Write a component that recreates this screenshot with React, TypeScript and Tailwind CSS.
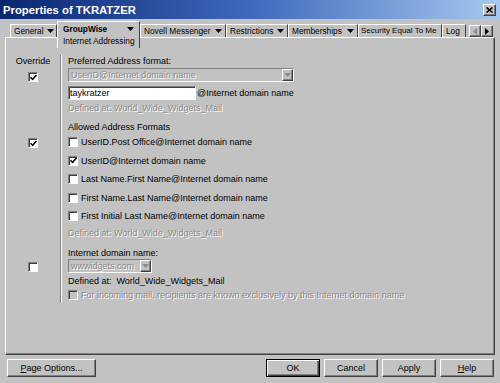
import React from "react";

const raised =
  "border border-t-white border-l-white border-b-[#404040] border-r-[#404040] shadow-[inset_-1px_-1px_0_#808080]";
const sunken =
  "border border-t-[#808080] border-l-[#808080] border-b-white border-r-white";
const dim = "text-[#8a8a8a] [text-shadow:1px_1px_0_#ffffff]";

function Arrow({ disabled }: { disabled?: boolean }) {
  return (
    <svg width="7" height="4" viewBox="0 0 7 4" className="shrink-0">
      <path d="M0 0h7L3.5 4z" fill={disabled ? "#8a8a8a" : "#000"} />
    </svg>
  );
}

function Check({ checked, disabled }: { checked?: boolean; disabled?: boolean }) {
  return (
    <span
      className={`w-[10px] h-[10px] shrink-0 flex items-center justify-center ${sunken} shadow-[inset_1px_1px_0_#404040] ${
        disabled ? "bg-[#c2c2c2]" : "bg-white"
      }`}
    >
      {checked && (
        <svg width="7" height="7" viewBox="0 0 7 7">
          <path d="M0.5 3.2L2.6 5.4L6.4 1" fill="none" stroke="#000" strokeWidth="1.6" />
        </svg>
      )}
    </span>
  );
}

function Tab({ label, className, arrow }: { label: string; className: string; arrow?: boolean }) {
  return (
    <div
      className={`h-[13px] mt-[3px] shrink-0 flex items-center justify-between gap-[3px] border-t border-l border-r border-t-white border-l-white border-r-[#404040] overflow-hidden whitespace-nowrap ${className}`}
    >
      <span>{label}</span>
      {arrow && <Arrow />}
    </div>
  );
}

function Row({ label, checked }: { label: string; checked?: boolean }) {
  return (
    <div className="h-[18.5px] flex items-center gap-[3px]">
      <Check checked={checked} />
      <span>{label}</span>
    </div>
  );
}

function Btn({ children, className }: { children: React.ReactNode; className: string }) {
  return (
    <button className={`h-[18px] flex items-center justify-center text-[9px] text-black ${className}`}>
      {children}
    </button>
  );
}

export default function App() {
  return (
    <div className="w-[500px] h-[383px] bg-[#c2c2c2] flex flex-col font-['Liberation_Sans',Arial,sans-serif] text-[9px] text-black leading-[12px] select-none overflow-hidden">
      {/* title bar */}
      <div className="h-[19px] flex items-center justify-between pl-[3px] pr-[4px] bg-linear-to-r from-[#0a2670] via-[#3f69bb] to-[#a6c8ee]">
        <span className="text-white font-bold text-[11.3px]">Properties of TKRATZER</span>
        <span className={`w-[13px] h-[12px] bg-[#c2c2c2] flex items-center justify-center ${raised}`}>
          <svg width="7" height="6" viewBox="0 0 7 6">
            <path d="M0.5 0.5L6.5 5.5M6.5 0.5L0.5 5.5" stroke="#000" strokeWidth="1.6" />
          </svg>
        </span>
      </div>

      <div className="flex-1 flex flex-col px-[5px] pt-[2px]">
        {/* tabs */}
        <div className="h-[16px] flex items-start pl-[5px] pr-[2px] text-[8.3px]">
          <Tab label="General" arrow className="w-[47px] px-[3px]" />
          <div className="relative z-10 shrink-0 h-[27px] w-[83px] flex flex-col px-[5px] pt-[1px] bg-[#c2c2c2] border-t border-l border-r border-t-white border-l-white border-r-[#404040] whitespace-nowrap">
            <div className="flex items-center justify-between">
              <span className="font-bold">GroupWise</span>
              <Arrow />
            </div>
            <span>Internet Addressing</span>
          </div>
          <Tab label="Novell Messenger" arrow className="w-[86px] px-[3px]" />
          <Tab label="Restrictions" arrow className="w-[62px] px-[3px]" />
          <Tab label="Memberships" arrow className="w-[70px] px-[3px]" />
          <Tab label="Security Equal To Me" className="w-[84px] px-[2px] text-[8px]" />
          <Tab label="Log" className="w-[24px] px-[3px] justify-start" />
          <div className="ml-auto mt-[4px] flex">
            <span className={`w-[12px] h-[12px] flex items-center justify-center ${raised}`}>
              <svg width="4" height="7" viewBox="0 0 4 7"><path d="M4 0v7L0 3.5z" fill="#8a8a8a" /></svg>
            </span>
            <span className={`w-[12px] h-[12px] flex items-center justify-center ${raised}`}>
              <svg width="4" height="7" viewBox="0 0 4 7"><path d="M0 0v7L4 3.5z" fill="#000" /></svg>
            </span>
          </div>
        </div>

        {/* panel */}
        <div className="h-[318px] flex pt-[17px] border border-t-white border-l-white border-b-[#404040] border-r-[#404040] shadow-[inset_-1px_-1px_0_#808080]">
          <div className="w-[55px] h-[248px] flex flex-col items-center border-r border-r-[#808080] shadow-[1px_0_0_#ffffff]">
            <span className="h-[12px]">Override</span>
            <span className="mt-[5px]"><Check checked /></span>
            <span className="mt-[56px]"><Check checked /></span>
            <span className="mt-[114px]"><Check /></span>
          </div>

          <div className="flex flex-col pl-[7px]">
            <span className="h-[12px]">Preferred Address format:</span>
            <div className={`mt-[1px] w-[226px] h-[14px] flex items-center bg-[#c2c2c2] ${sunken}`}>
              <span className={`flex-1 pl-[2px] ${dim}`}>UserID@Internet domain name</span>
              <span className={`w-[11px] h-[12px] flex items-center justify-center ${raised}`}>
                <Arrow disabled />
              </span>
            </div>
            <div className="mt-[4px] flex items-center">
              <span className={`w-[128px] h-[14px] bg-white flex items-center pl-[1px] ${sunken} shadow-[inset_1px_1px_0_#404040]`}>
                taykratzer
              </span>
              <span className="ml-[1px]">@Internet domain name</span>
            </div>
            <span className={`mt-[2px] h-[12px] ${dim}`}>Defined at: World_Wide_Widgets_Mail</span>

            <span className="mt-[7px] h-[12px]">Allowed Address Formats</span>
            <Row label="UserID.Post Office@Internet domain name" />
            <Row label="UserID@Internet domain name" checked />
            <Row label="Last Name.First Name@Internet domain name" />
            <Row label="First Name.Last Name@Internet domain name" />
            <Row label="First Initial Last Name@Internet domain name" />
            <span className={`mt-[1px] h-[12px] ${dim}`}>Defined at: World_Wide_Widgets_Mail</span>

            <span className="mt-[8px] h-[12px]">Internet domain name:</span>
            <div className={`w-[84px] h-[14px] flex items-center bg-[#c2c2c2] ${sunken}`}>
              <span className={`flex-1 pl-[2px] ${dim}`}>wwwidgets.com</span>
              <span className={`w-[11px] h-[12px] flex items-center justify-center ${raised}`}>
                <Arrow disabled />
              </span>
            </div>
            <span className="mt-[2px] h-[12px]">Defined at:&nbsp; World_Wide_Widgets_Mail</span>
            <div className="mt-[2px] h-[12px] flex items-center gap-[3px]">
              <Check disabled />
              <span className={dim}>For incoming mail, recipients are known exclusively by this Internet domain name</span>
            </div>
          </div>
        </div>

        {/* buttons */}
        <div className="mt-[4px] flex items-center pl-[2px] pr-[1px] gap-[4px]">
          <Btn className={`w-[89px] ${raised}`}>
            <span><u>P</u>age Options...</span>
          </Btn>
          <div className="flex-1" />
          <Btn className="w-[54px] border border-black shadow-[inset_1px_1px_0_#ffffff,inset_-1px_-1px_0_#404040,inset_-2px_-2px_0_#808080]">
            OK
          </Btn>
          <Btn className={`w-[54px] ${raised}`}>Cancel</Btn>
          <Btn className={`w-[54px] ${raised}`}>Apply</Btn>
          <Btn className={`w-[54px] ${raised}`}>
            <span><u>H</u>elp</span>
          </Btn>
        </div>
      </div>
    </div>
  );
}
